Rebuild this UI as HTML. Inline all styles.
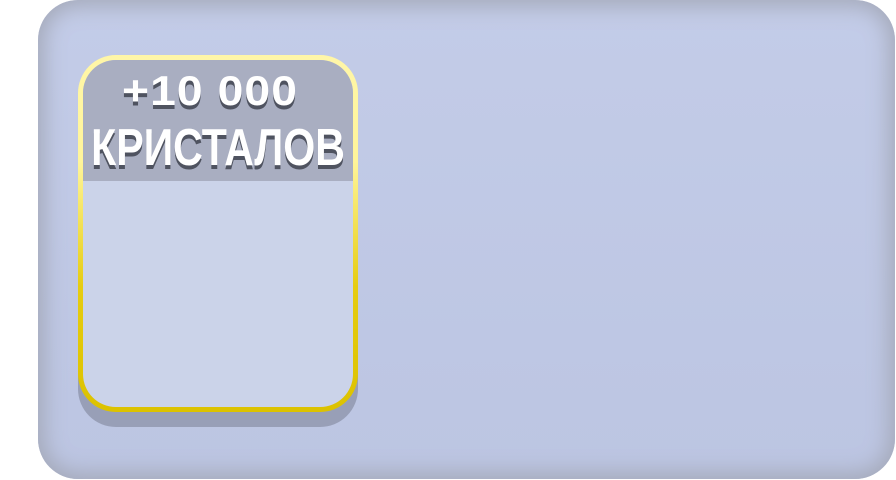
<!DOCTYPE html>
<html><head><meta charset="utf-8"><style>
html,body{margin:0;padding:0;background:#fff;width:896px;height:480px;overflow:hidden}
.panel{position:absolute;left:38px;top:0;width:857px;height:479px;border-radius:40px;
background:linear-gradient(#c3cce8,#bcc5e2);
box-shadow:inset 0 0 22px 6px #a4a9b9;}
.shadow{position:absolute;left:78px;top:72px;width:280px;height:355px;border-radius:38px;background:#989fb7}
.card{position:absolute;left:78px;top:55px;width:280px;height:357px;border-radius:38px;
background:linear-gradient(#fff6a8 0%,#fff59a 30%,#e6cc10 65%,#dcc200 100%);}
.inner{position:absolute;left:5px;top:5px;right:5px;bottom:5px;border-radius:33px;overflow:hidden;
background:#cbd3e9}
.head{position:absolute;left:0;top:0;right:0;height:121px;background:#a9aec1}
.t{position:absolute;left:-40px;right:-40px;text-align:center;color:#fff;font-family:"Liberation Sans",sans-serif;font-weight:bold;
text-shadow:0 4px 0 #4f5360;line-height:1;white-space:nowrap}
</style></head><body>
<div class="panel"></div>
<div class="shadow"></div>
<div class="card"><div class="inner"><div class="head"></div>
<div class="t" style="top:10px;font-size:42px;left:-56px;transform:scaleX(1.1);letter-spacing:1px">+10 000</div>
<div class="t" style="top:62px;font-size:52px;transform:scaleX(0.79)">КРИСТАЛОВ</div>
</div></div>
</body></html>
